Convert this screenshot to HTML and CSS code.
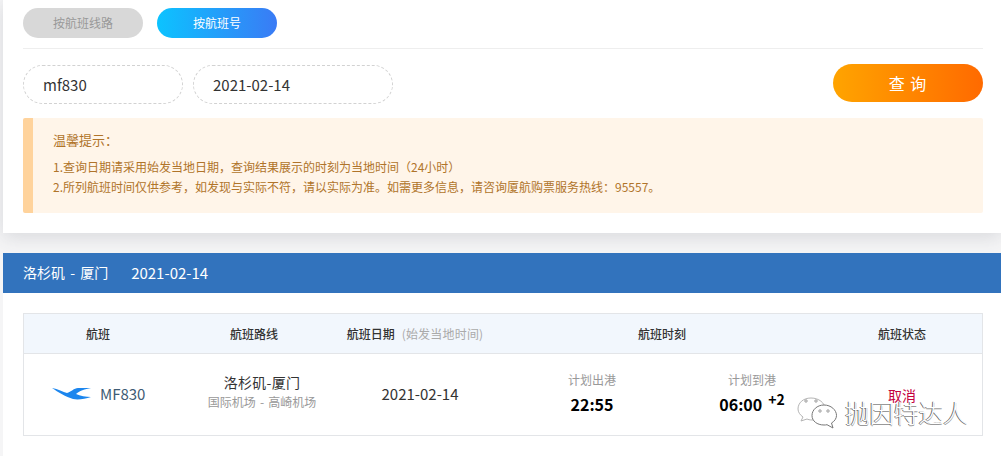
FILE: index.html
```html
<!DOCTYPE html>
<html lang="zh-CN">
<head>
    <meta charset="UTF-8">
    <title>航班动态</title>
    <link rel="stylesheet" href="styles.css">
</head>
<body>
<div class="page">
    <div class="search">
        <div class="tabs">
            <span class="tab">按航班线路</span>
            <span class="tab active">按航班号</span>
        </div>
        <div class="form">
            <div class="field field-no">mf830</div>
            <div class="field field-date">2021-02-14</div>
            <div class="submit">查 询</div>
        </div>
        <div class="tips">
            <p class="tips-title">温馨提示：</p>
            <p>1.查询日期请采用始发当地日期，查询结果展示的时刻为当地时间（24小时）</p>
            <p>2.所列航班时间仅供参考，如发现与实际不符，请以实际为准。如需更多信息，请咨询厦航购票服务热线：95557。</p>
        </div>
    </div>
    <div class="result">
        <div class="result-bar">
            <span class="result-route">洛杉矶 - 厦门</span>
            <span class="result-date">2021-02-14</span>
        </div>
        <div class="table">
            <div class="thead">
                <div>航班</div>
                <div>航班路线</div>
                <div>航班日期<span class="thead-note">(始发当地时间)</span></div>
                <div>航班时刻</div>
                <div class="thead-status">航班状态</div>
            </div>
            <div class="tbody">
                <div class="flight">
                    <svg class="flight-logo" width="40" height="14" viewBox="0 0 40 14">
                        <path d="M0 1C6 2 11 5 15 6C19 5 22 1 26 1L39 1C33 2 27 4 24 7C28 9 34 10 39 10C33 12 26 13 21 12C14 10 6 5 0 1Z" fill="#1c86ee"/>
                    </svg>
                    <span>MF830</span>
                </div>
                <div class="route">
                    <div class="route-city">洛杉矶-厦门</div>
                    <div class="route-port">国际机场 - 高崎机场</div>
                </div>
                <div class="date">2021-02-14</div>
                <div class="time">
                    <div class="time-label">计划出港</div>
                    <div class="time-value">22:55</div>
                </div>
                <div class="time">
                    <div class="time-label">计划到港</div>
                    <div class="time-value">06:00<sup>+2</sup></div>
                </div>
                <div class="status">取消</div>
            </div>
        </div>
    </div>
    <div class="watermark">
        <svg width="41" height="32" viewBox="0 0 41 32" fill="#fff" stroke="#9a9a9a" stroke-width="1">
            <path d="M14 1C6 1 1 6 1 12C1 15 3 18 6 20L4 24L10 22C11 22.500 13 23 15 23C22 23 28 18 28 12C28 6 22 1 14 1Z" stroke="#b5b5b5"/>
            <path d="M27 8C20 8 15 13 15 18.500C15 24 20 28 27 28C28 28 29 28 30 27.700L36 31L34.500 26C37.500 24.300 39.500 21.500 39.500 18.500C39.500 13 34 8 27 8Z" stroke="#777"/>
            <circle cx="9" cy="4" r="1.200"/>
            <circle cx="19" cy="4" r="1.200"/>
            <circle cx="23" cy="14" r="1.200"/>
            <circle cx="31" cy="14" r="1.200"/>
        </svg>
        <span>抛因特达人</span>
    </div>
</div>
</body>
</html>
```

FILE: styles.css
```css
* {
    margin: 0;
    padding: 0;
    box-sizing: border-box;
}

html, body {
    height: 456px;
    overflow: hidden;
}

body {
    background: #f5f5f6;
    font-family: "Noto Sans CJK SC", "Noto Sans", sans-serif;
    color: #333;
}

.page {
    position: relative;
    height: 456px;
    padding-left: 3px;
}

.search {
    height: 233px;
    padding: 8px 18px 0 20px;
    background: #fff;
    box-shadow: 0 4px 18px rgba(60, 70, 90, .16);
}

.tabs {
    display: flex;
    gap: 14px;
    height: 41px;
    border-bottom: 1px solid #eee;
}

.tab {
    width: 120px;
    height: 30px;
    border-radius: 15px;
    background: #d8d8d8;
    color: #999;
    font-size: 12px;
    line-height: 30px;
    text-align: center;
}

.tab.active {
    background: linear-gradient(90deg, #0cc3ff, #3a7bf5);
    color: #fff;
}

.form {
    display: flex;
    align-items: flex-start;
    gap: 10px;
    margin-top: 16px;
}

.field {
    height: 39px;
    padding-left: 19px;
    border: 1px dashed #d2d2d2;
    border-radius: 20px;
    font-size: 15px;
    line-height: 37px;
}

.field-no {
    width: 160px;
}

.field-date {
    width: 200px;
}

.submit {
    width: 150px;
    height: 38px;
    margin-top: -1px;
    margin-left: auto;
    border-radius: 19px;
    background: linear-gradient(90deg, #ffa400, #ff6a00);
    color: #fff;
    font-size: 16px;
    letter-spacing: 1px;
    line-height: 38px;
    text-align: center;
}

.tips {
    height: 95px;
    margin-top: 14px;
    padding: 12px 0 0 20px;
    border-left: 10px solid #ffd39c;
    border-radius: 2px;
    background: #fff5e9;
    color: #b0742a;
    font-size: 12px;
    line-height: 20px;
}

.tips-title {
    margin-bottom: 7px;
    font-size: 13px;
}

.result {
    height: 203px;
    margin-top: 20px;
    background: #fff;
}

.result-bar {
    display: flex;
    gap: 23px;
    height: 40px;
    padding-left: 20px;
    background: #3273bd;
    color: #fff;
    font-size: 14px;
    line-height: 39px;
}

.result-route {
    word-spacing: 2px;
}

.result-date {
    font-size: 15px;
}

.table {
    width: 960px;
    height: 123px;
    margin: 20px 0 0 20px;
    border: 1px solid #e3e5e8;
}

.thead {
    display: grid;
    grid-template-columns: 148px 164px 158px 336px 152px;
    height: 40px;
    border-bottom: 1px solid #e3e5e8;
    background: #f2f7fd;
    color: #333;
    font-size: 12px;
    font-weight: 500;
    line-height: 39px;
    text-align: center;
}

.thead-note {
    margin-left: 7px;
    color: #aaa;
    font-weight: 400;
    letter-spacing: .2px;
}

.thead-status {
    padding-right: 8px;
}

.tbody {
    display: grid;
    grid-template-columns: 148px 164px 176px 160px 160px 150px;
    align-items: center;
    height: 81px;
    text-align: center;
}

.flight {
    display: flex;
    align-items: center;
    gap: 8px;
    padding-left: 28px;
    margin-top: -2px;
    color: #3f5c75;
    font-size: 15px;
}

.route {
    margin-top: -5px;
    padding-left: 16px;
}

.route-city {
    font-size: 14px;
    letter-spacing: .3px;
    line-height: 20px;
}

.route-port {
    color: #999;
    font-size: 12px;
    word-spacing: 1.500px;
    line-height: 20px;
}

.date {
    margin-top: -2px;
    padding-right: 8px;
    font-size: 15px;
}

.time {
    margin-top: -1px;
}

.time-label {
    color: #999;
    font-size: 12px;
    line-height: 20px;
}

.time-value {
    color: #000;
    font-size: 16px;
    font-weight: 700;
    line-height: 28px;
}

.time-value sup {
    margin-left: 6px;
    font-size: 14px;
    line-height: 0;
}

.status {
    padding-right: 10px;
    color: #c5003e;
    font-size: 14px;
}

.watermark {
    position: absolute;
    left: 797px;
    top: 397px;
    display: flex;
    align-items: center;
    gap: 7px;
    color: #fff;
    font-size: 24.500px;
    font-weight: 300;
    line-height: 30px;
    text-shadow: -1px 0 0 #666, 0 1px 0 #999;
}
```
